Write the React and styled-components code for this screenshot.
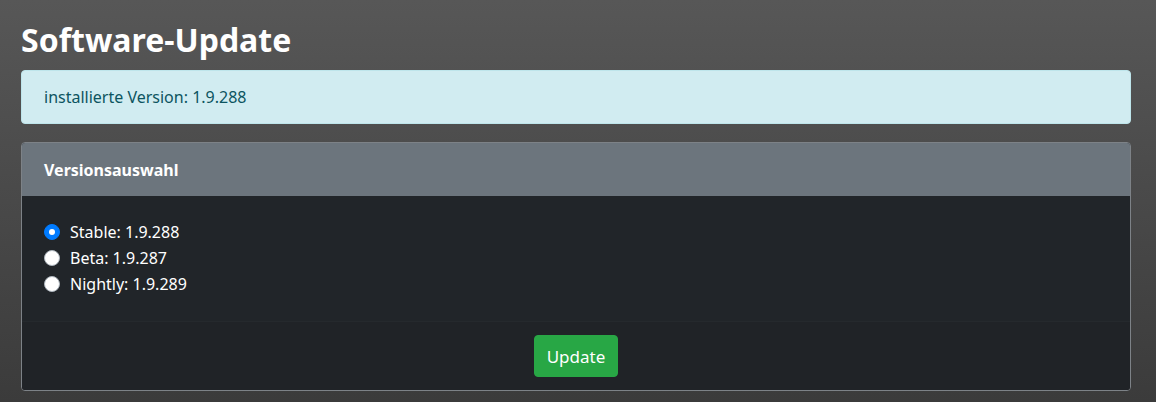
import React, { useState } from 'react'
import styled, { createGlobalStyle } from 'styled-components';

const GlobalStyle = createGlobalStyle`
html, body {
  margin: 0;
  padding: 0;
}
body {
  min-height: 402px;
  background: linear-gradient(180deg, #575757 0%, #3b3b3b 100%);
  font-family: "Noto Sans", "Open Sans", sans-serif;
  font-size: 17.6px;
  color: #fff;
}
`;

const Page = styled.div`
padding: 18px 25px 0 21px;
`;

const Title = styled.h2`
margin: 0 0 9px 0;
font-size: 32px;
font-weight: 700;
line-height: 43px;
color: #fff;
`;

const Alert = styled.div`
box-sizing: border-box;
height: 54px;
padding: 0 22px;
display: flex;
align-items: center;
background: #d1ecf1;
border: 1px solid #bee5eb;
border-radius: 4px;
color: #0c5460;
font-size: 16px;
`;

const Card = styled.div`
margin-top: 18px;
border: 1px solid #7d8287;
border-radius: 4px;
overflow: hidden;
background: #212529;
`;

const CardHeader = styled.div`
height: 53px;
padding: 0 22px;
display: flex;
align-items: center;
background: #6c757d;
font-weight: 700;
font-size: 16px;
color: #fff;
`;

const CardBody = styled.div`
padding: 23px 22px 24px;
display: flex;
flex-direction: column;
`;

const RadioRow = styled.label`
display: flex;
align-items: center;
gap: 10px;
height: 26px;
font-size: 16px;
color: #fff;
cursor: pointer;
`;

const Dot = styled.span`
box-sizing: border-box;
width: 16px;
height: 16px;
border-radius: 50%;
background: ${(p) => (p.checked ? '#007bff' : '#fff')};
border: 1px solid ${(p) => (p.checked ? '#007bff' : '#adb5bd')};
display: flex;
align-items: center;
justify-content: center;
&::after {
  content: '';
  width: 6px;
  height: 6px;
  border-radius: 50%;
  background: #fff;
  display: ${(p) => (p.checked ? 'block' : 'none')};
}
`;

const CardFooter = styled.div`
height: 68px;
display: flex;
align-items: center;
justify-content: center;
background: #202327;
border-top: 1px solid #25292d;
`;

const BTN = styled.button`
height: 42px;
padding: 0 12px;
border: 1px solid #28a745;
border-radius: 4px;
background: #28a745;
color: #fff;
font-family: inherit;
font-size: 17px;
cursor: pointer;
:hover {
    background: #218838;
}
`;

const VERSIONS = [
  { id: 'stable', label: 'Stable: 1.9.288' },
  { id: 'beta', label: 'Beta: 1.9.287' },
  { id: 'nightly', label: 'Nightly: 1.9.289' },
];

function App() {
  const [selected, setSelected] = useState('stable');
  return (
    <>
      <GlobalStyle />
      <Page>
        <Title>Software-Update</Title>
        <Alert>installierte Version: 1.9.288</Alert>
        <Card>
          <CardHeader>Versionsauswahl</CardHeader>
          <CardBody>
            {VERSIONS.map((v) => (
              <RadioRow key={v.id} onClick={() => setSelected(v.id)}>
                <Dot checked={selected === v.id} />
                {v.label}
              </RadioRow>
            ))}
          </CardBody>
          <CardFooter>
            <BTN>Update</BTN>
          </CardFooter>
        </Card>
      </Page>
    </>
  )
}

export default App
